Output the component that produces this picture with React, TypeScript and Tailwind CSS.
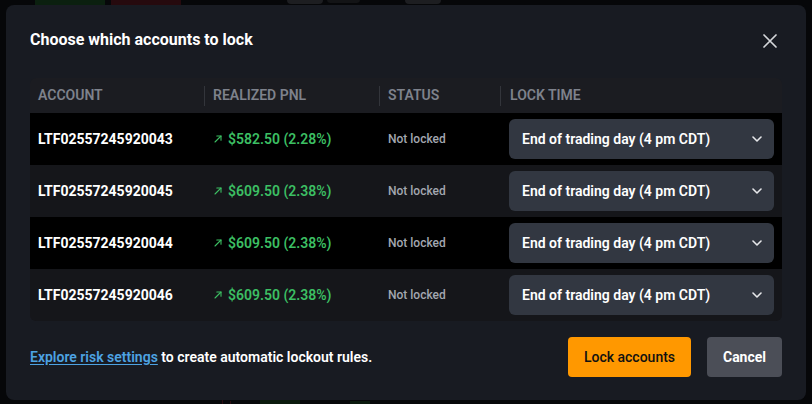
import React from "react";

const rows = [
  { id: "LTF02557245920043", pnl: "$582.50 (2.28%)" },
  { id: "LTF02557245920045", pnl: "$609.50 (2.38%)" },
  { id: "LTF02557245920044", pnl: "$609.50 (2.38%)" },
  { id: "LTF02557245920046", pnl: "$609.50 (2.38%)" },
];

function Arrow() {
  return (
    <svg width="8" height="8" viewBox="0 0 8 8" fill="none" stroke="#3cbf63" strokeWidth="1.1" strokeLinecap="round" strokeLinejoin="round">
      <path d="M1 7 L7 1" />
      <path d="M2.8 1 H7 V5.2" />
    </svg>
  );
}

function Chevron() {
  return (
    <svg width="10" height="6" viewBox="0 0 10 6" fill="none" stroke="#e6e7ea" strokeWidth="1.6" strokeLinecap="round" strokeLinejoin="round">
      <path d="M1 1 L5 5 L9 1" />
    </svg>
  );
}

export default function App() {
  return (
    <div
      className="relative w-[812px] h-[404px] overflow-hidden bg-[#060709]"
      style={{ fontFamily: "Roboto, 'Liberation Sans', sans-serif" }}
    >
      {/* background chart remnants */}
      <div className="absolute left-[35px] top-0 w-[70px] h-[5px] bg-[#0b200f]" />
      <div className="absolute left-[111px] top-0 w-[70px] h-[5px] bg-[#260a0e]" />
      <div className="absolute left-[287px] top-[-4px] w-[36px] h-[8px] rounded bg-[#1d1e21]" />
      <div className="absolute left-[327px] top-[-4px] w-[33px] h-[7px] rounded bg-[#131416]" />
      <div className="absolute left-[405px] top-[-4px] w-[36px] h-[8px] rounded bg-[#1d1e21]" />
      <div className="absolute left-[222px] top-[400px] w-[1px] h-[4px] bg-[#2a0c10]" />
      <div className="absolute left-[230px] top-[401px] w-[1px] h-[3px] bg-[#2a0c10]" />
      <div className="absolute left-[260px] top-[400px] w-[40px] h-[4px] bg-[#0a1a0d]" />
      <div className="absolute left-[350px] top-[401px] w-[20px] h-[3px] bg-[#0a1a0d]" />

      <div className="relative ml-[6px] mt-[5px] w-[800px] h-[395px] rounded-lg bg-[#181b22] px-6 flex flex-col">
        {/* header */}
        <div className="flex items-center justify-between pt-[22px] h-[48px]">
          <h2 className="text-[16px] font-bold text-white leading-6">Choose which accounts to lock</h2>
          <svg width="14" height="14" viewBox="0 0 14 14" className="mr-[5px] mt-[2px]" fill="none" stroke="#d4d6da" strokeWidth="1.7" strokeLinecap="round">
            <path d="M1 1 L13 13 M13 1 L1 13" />
          </svg>
        </div>

        {/* table */}
        <div className="mt-[25px] rounded-md bg-[#1b1c21] overflow-hidden">
          <div className="flex h-[35px] items-center text-[14px] font-semibold uppercase text-[#7e828c]">
            <div className="w-[174px] pl-2">Account</div>
            <div className="w-[175px] pl-2 border-l border-[#33353b] h-[20px] flex items-center">Realized PnL</div>
            <div className="w-[121px] pl-2 border-l border-[#33353b] h-[20px] flex items-center">Status</div>
            <div className="flex-1 pl-[9px] border-l border-[#33353b] h-[20px] flex items-center">Lock time</div>
          </div>
          {rows.map((r, i) => (
            <div key={r.id} className={`flex h-[52px] items-center ${i % 2 === 0 ? "bg-black" : "bg-[#15161a]"}`}>
              <div className="w-[174px] pl-2 text-[14px] font-bold text-white">{r.id}</div>
              <div className="w-[175px] pl-[10px] flex items-center gap-[6px] text-[14px] font-semibold text-[#3cbf63]">
                <Arrow />
                <span>{r.pnl}</span>
              </div>
              <div className="w-[121px] pl-[9px] text-[12px] font-medium text-[#a3a7b0]">Not locked</div>
              <div className="flex-1 pl-[9px] pr-2">
                <div className="h-[40px] rounded-md bg-[#323741] flex items-center justify-between pl-[13px] pr-[12px]">
                  <span className="text-[14px] font-semibold text-white">End of trading day (4 pm CDT)</span>
                  <Chevron />
                </div>
              </div>
            </div>
          ))}
        </div>

        {/* footer */}
        <div className="flex items-center justify-between mt-[16px]">
          <p className="text-[14px] font-semibold text-white">
            <span className="text-[#4da3e3] underline underline-offset-2">Explore risk settings</span> to create automatic lockout rules.
          </p>
          <div className="flex gap-4">
            <button className="h-[40px] w-[123px] rounded bg-[#ff9800] text-[14px] font-medium text-[#111111]">Lock accounts</button>
            <button className="h-[40px] w-[75px] rounded bg-[#4b4e57] text-[14px] font-bold text-white">Cancel</button>
          </div>
        </div>
      </div>
    </div>
  );
}
